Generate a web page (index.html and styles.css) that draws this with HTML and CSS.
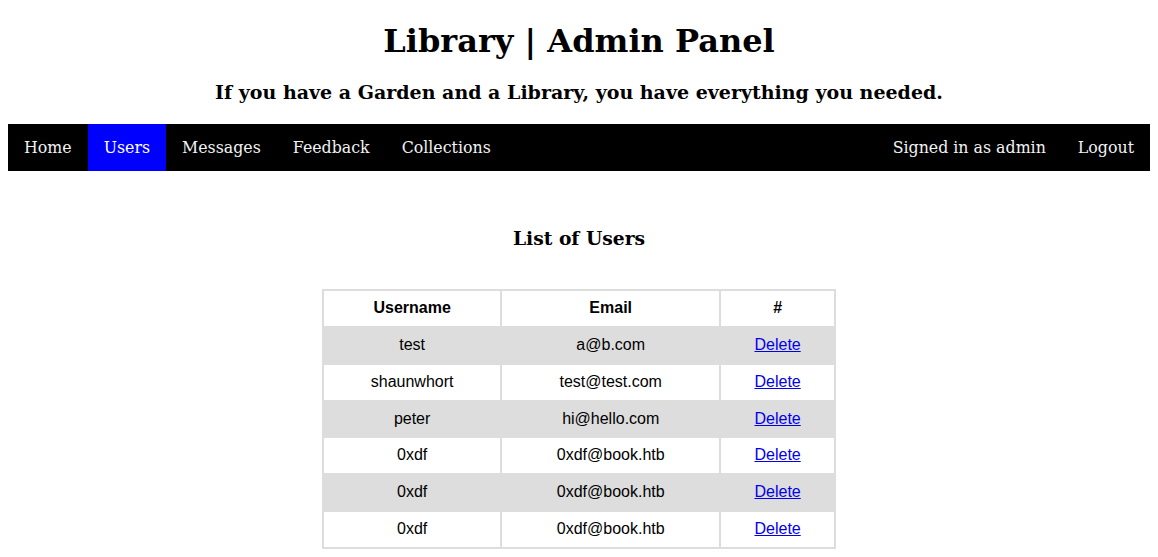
FILE: index.html
```html
<!DOCTYPE html>
<html>
<head>
<meta charset="utf-8">
<title>Library | Admin Panel</title>
<link rel="stylesheet" href="styles.css">
</head>
<body>
<h1 class="title">Library | Admin Panel</h1>
<h3 class="tagline">If you have a Garden and a Library, you have everything you needed.</h3>
<nav class="topnav">
  <div class="nav-left">
    <a href="#">Home</a>
    <a href="#" class="active">Users</a>
    <a href="#">Messages</a>
    <a href="#">Feedback</a>
    <a href="#">Collections</a>
  </div>
  <div class="nav-right">
    <a href="#">Signed in as admin</a>
    <a href="#">Logout</a>
  </div>
</nav>
<h3 class="section-title">List of Users</h3>
<table class="users">
  <tr><th class="col-user">Username</th><th class="col-email">Email</th><th class="col-action">#</th></tr>
  <tr><td>test</td><td>a@b.com</td><td><a href="#">Delete</a></td></tr>
  <tr><td>shaunwhort</td><td>test@test.com</td><td><a href="#">Delete</a></td></tr>
  <tr><td>peter</td><td>hi@hello.com</td><td><a href="#">Delete</a></td></tr>
  <tr><td>0xdf</td><td>0xdf@book.htb</td><td><a href="#">Delete</a></td></tr>
  <tr><td>0xdf</td><td>0xdf@book.htb</td><td><a href="#">Delete</a></td></tr>
  <tr><td>0xdf</td><td>0xdf@book.htb</td><td><a href="#">Delete</a></td></tr>
</table>
</body>
</html>
```
FILE: styles.css
```css
body {
  margin: 8px;
  font-family: "DejaVu Serif", serif;
  color: #000;
  background: #fff;
}
.title {
  text-align: center;
  font-size: 32px;
  margin: 14px 0 21px;
}
.tagline {
  text-align: center;
  font-size: 19px;
  margin: 21px 0 21px;
}
.topnav {
  display: flex;
  justify-content: space-between;
  background: #000;
}
.nav-left, .nav-right {
  display: flex;
}
.topnav a {
  color: #f2f2f2;
  text-decoration: none;
  padding: 14px 16px;
  font-size: 15.8px;
  line-height: 19px;
}
.topnav a.active {
  background: #0000ff;
  color: #fff;
}
.section-title {
  text-align: center;
  font-size: 18.72px;
  margin: 56px 0 40px;
}
.users {
  font-family: "Liberation Sans", Arial, sans-serif;
  border-collapse: collapse;
  width: 45%;
  margin: 0 auto;
  font-size: 16px;
}
.users th, .users td {
  border: 2px solid #ddd;
  text-align: center;
  padding: 8px;
  line-height: 18.85px;
}
.users .col-user { width: 34.8%; }
.users .col-email { width: 42.8%; }
.users .col-action { width: 22.4%; }
.users tr:nth-child(even) {
  background: #ddd;
}
.users a {
  color: #0000ee;
}
```
